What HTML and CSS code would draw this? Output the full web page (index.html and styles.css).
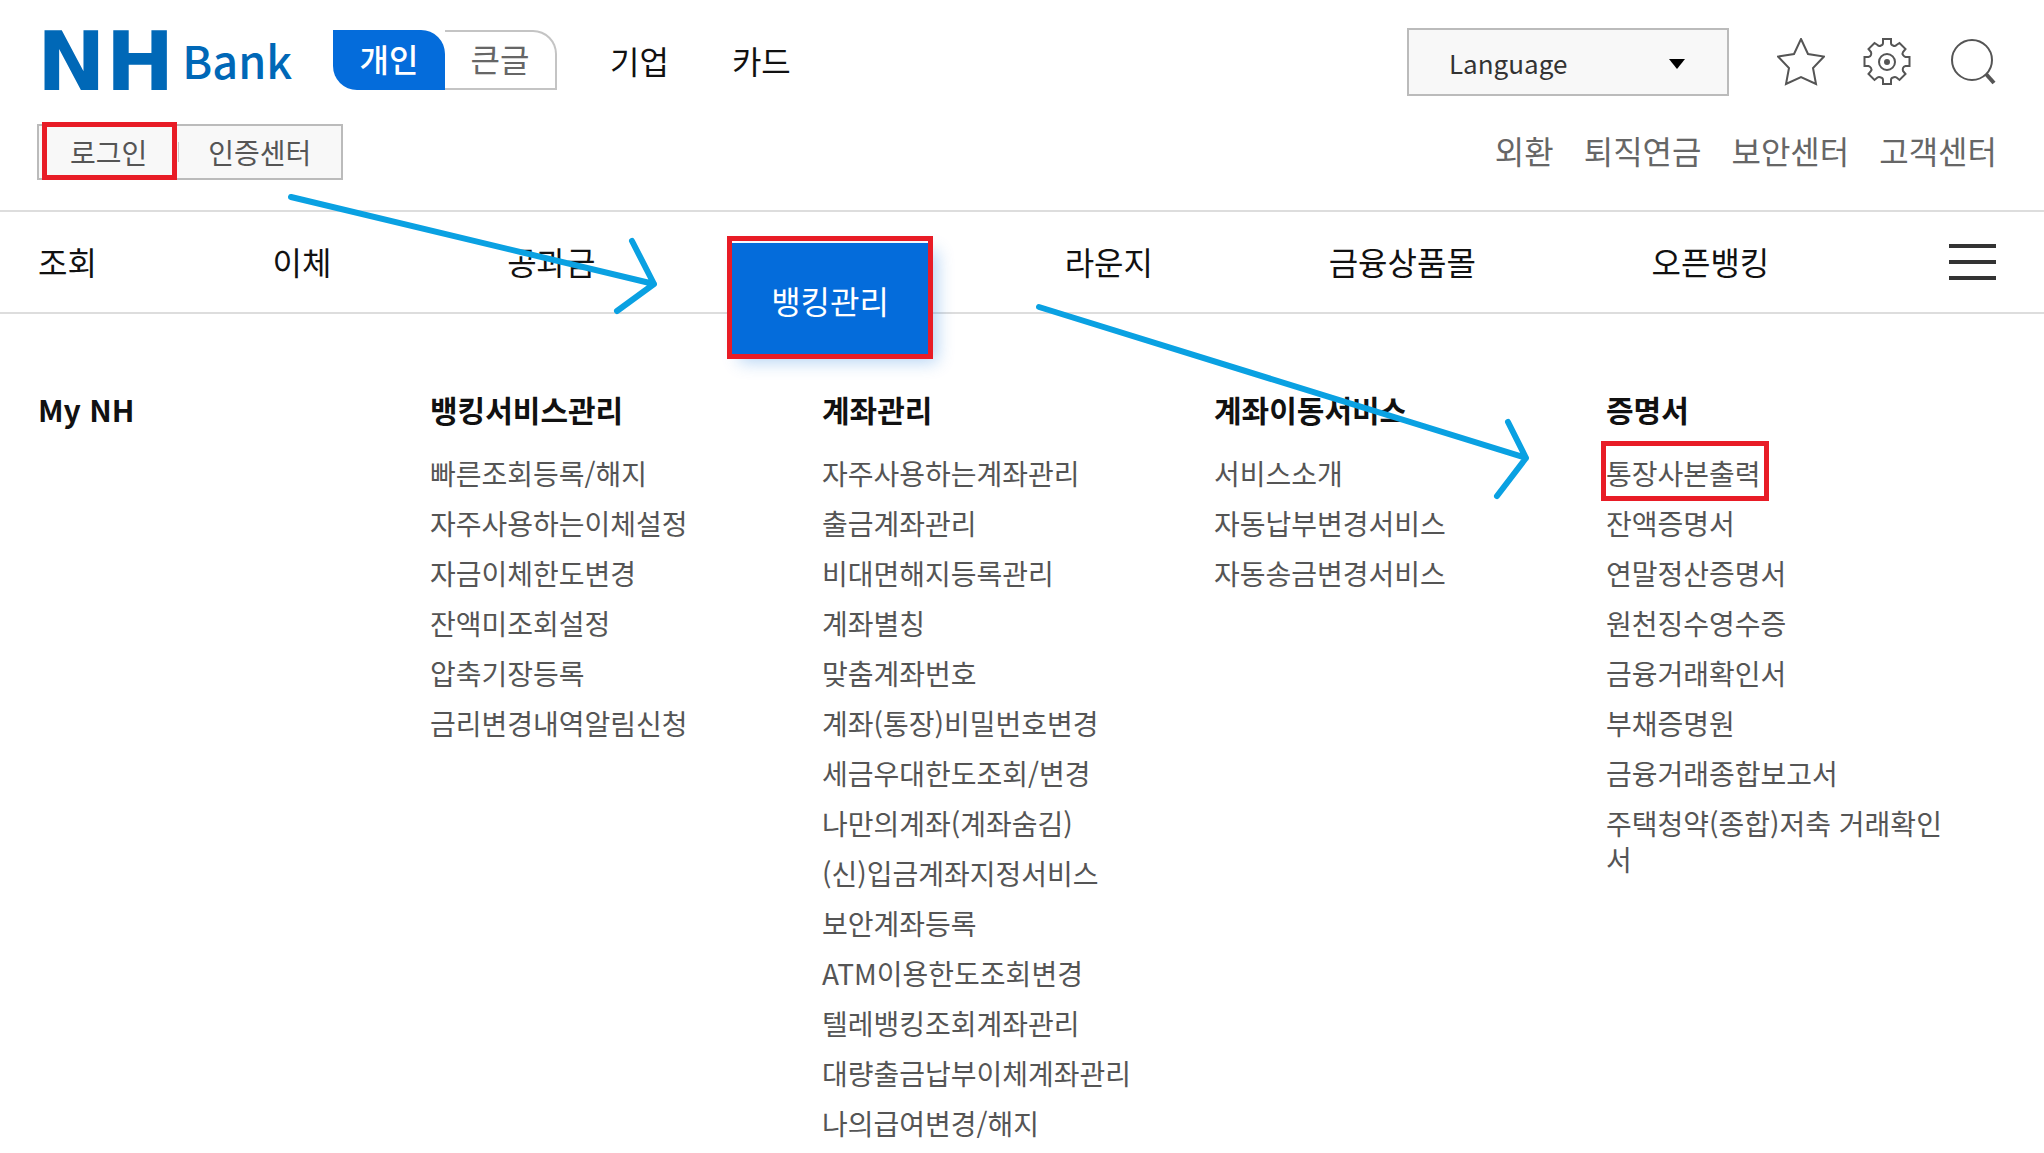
FILE: index.html
```html
<!DOCTYPE html>
<html lang="ko">
<head>
  <meta charset="UTF-8" />
  <meta name="viewport" content="width=device-width, initial-scale=1" />
  <title>NH Bank</title>
  <link rel="stylesheet" href="styles.css">
</head>
<body>

<header class="header">
  <div class="header-row">
    <a href="#" class="logo"><span class="logo-nh">NH</span><span class="logo-bank">Bank</span></a>

    <div class="view-toggle">
      <button type="button" class="toggle-btn on">개인</button>
      <button type="button" class="toggle-btn">큰글</button>
    </div>

    <div class="site-links">
      <a href="#">기업</a>
      <a href="#">카드</a>
    </div>

    <div class="tools">
      <div class="language">
        <select class="language-select" aria-label="Language">
          <option>Language</option>
        </select>
        <svg class="language-arrow" width="18" height="10" viewBox="0 0 18 10"><path d="M1 0h16L9 10z" /></svg>
      </div>
      <button type="button" class="icon-btn" aria-label="즐겨찾기">
        <svg width="48" height="48" viewBox="0 0 48 48">
          <path d="M24 1L31 16L47 18.500L36 30L39 46L24 39L9 46L12 30L1 18.500L17 16Z" />
        </svg>
      </button>
      <button type="button" class="icon-btn" aria-label="설정">
        <svg width="48" height="48" viewBox="0 0 48 48">
          <path d="M20 1h8v4q0 2 2 2.500q2 1 3.500 -.5l3-2l6 6l-2.500 3q-1 1.500 0 3t2.500 2h4v9h-4q-2 .5-2.500 2t0 3l2.500 3l-6 6l-3-2.500q-1.500-1-3.500 0q-2 .5-2 2.500v4h-8v-4q0-2-2-2.500q-2-1-3.500 0l-3 2.500l-6-6l2.500-3q1-1.500 0-3t-2.500-2h-4v-9h4q2-.5 2.500-2t0-3l-2.500-3l6-6l3 2q1.500 1.500 3.500 .5q2-.5 2-2.500z" />
          <circle cx="24" cy="24" r="8" />
          <circle class="solid" cx="24" cy="24" r="2" />
        </svg>
      </button>
      <button type="button" class="icon-btn" aria-label="검색">
        <svg width="48" height="48" viewBox="0 0 48 48">
          <circle cx="23" cy="22" r="20" />
          <path class="handle" d="M37 36L45 45" />
        </svg>
      </button>
    </div>
  </div>

  <div class="header-row sub">
    <div class="login-box">
      <a href="#" class="login marked">로그인</a>
      <a href="#" class="cert">인증센터</a>
    </div>
    <div class="util-links">
      <a href="#">외환</a>
      <a href="#">퇴직연금</a>
      <a href="#">보안센터</a>
      <a href="#">고객센터</a>
    </div>
  </div>
</header>

<!-- Main menu -->
<nav class="gnb">
  <a href="#">조회</a>
  <a href="#">이체</a>
  <a href="#">공과금</a>
  <a href="#" class="active marked">뱅킹관리</a>
  <a href="#">라운지</a>
  <a href="#">금융상품몰</a>
  <a href="#">오픈뱅킹</a>
  <button type="button" class="menu-btn" aria-label="전체메뉴"><i></i><i></i><i></i></button>
</nav>

<!-- Sub menu -->
<main class="submenu">
  <section class="menu-col">
    <h2>My NH</h2>
  </section>

  <section class="menu-col">
    <h2>뱅킹서비스관리</h2>
    <ul>
      <li><a href="#">빠른조회등록/해지</a></li>
      <li><a href="#">자주사용하는이체설정</a></li>
      <li><a href="#">자금이체한도변경</a></li>
      <li><a href="#">잔액미조회설정</a></li>
      <li><a href="#">압축기장등록</a></li>
      <li><a href="#">금리변경내역알림신청</a></li>
    </ul>
  </section>

  <section class="menu-col">
    <h2>계좌관리</h2>
    <ul>
      <li><a href="#">자주사용하는계좌관리</a></li>
      <li><a href="#">출금계좌관리</a></li>
      <li><a href="#">비대면해지등록관리</a></li>
      <li><a href="#">계좌별칭</a></li>
      <li><a href="#">맞춤계좌번호</a></li>
      <li><a href="#">계좌(통장)비밀번호변경</a></li>
      <li><a href="#">세금우대한도조회/변경</a></li>
      <li><a href="#">나만의계좌(계좌숨김)</a></li>
      <li><a href="#">(신)입금계좌지정서비스</a></li>
      <li><a href="#">보안계좌등록</a></li>
      <li><a href="#">ATM이용한도조회변경</a></li>
      <li><a href="#">텔레뱅킹조회계좌관리</a></li>
      <li><a href="#">대량출금납부이체계좌관리</a></li>
      <li><a href="#">나의급여변경/해지</a></li>
    </ul>
  </section>

  <section class="menu-col">
    <h2>계좌이동서비스</h2>
    <ul>
      <li><a href="#">서비스소개</a></li>
      <li><a href="#">자동납부변경서비스</a></li>
      <li><a href="#">자동송금변경서비스</a></li>
    </ul>
  </section>

  <section class="menu-col">
    <h2>증명서</h2>
    <ul>
      <li><a href="#" class="copy-print marked">통장사본출력</a></li>
      <li><a href="#">잔액증명서</a></li>
      <li><a href="#">연말정산증명서</a></li>
      <li><a href="#">원천징수영수증</a></li>
      <li><a href="#">금융거래확인서</a></li>
      <li><a href="#">부채증명원</a></li>
      <li><a href="#">금융거래종합보고서</a></li>
      <li><a href="#">주택청약(종합)저축 거래확인서</a></li>
    </ul>
  </section>
</main>

<!-- Guide arrows: login > banking management > passbook copy -->
<svg class="guide" viewBox="0 0 2044 520" aria-hidden="true">
  <path d="M291 197L654 284M632 241L654 284L617 311" />
  <path d="M1039 307L1526 458M1508 422L1526 458L1497 496" />
</svg>

</body>
</html>
```

FILE: styles.css
```css
* { box-sizing: border-box; }
body {
  position: relative;
  margin: 0;
  background: #fff;
  color: #111;
  font-family: "Noto Sans CJK KR", "Noto Sans", sans-serif;
  font-size: 32px;
}
a {
  color: inherit;
  text-decoration: none;
}
button {
  padding: 0;
  border: none;
  background: none;
  font: inherit;
  cursor: pointer;
}

/* Header */
.header {
  padding: 28px 47px 30px 37px;
  border-bottom: 2px solid #ddd;
}
.header-row {
  display: flex;
  align-items: center;
  height: 68px;
}
.header-row.sub {
  justify-content: space-between;
  height: 56px;
  margin-top: 28px;
}
.logo {
  display: flex;
  align-items: center;
  gap: 8px;
  width: 296px;
  color: #0068b7;
  line-height: 56px;
}
.logo-nh {
  font-family: "DejaVu Sans", sans-serif;
  font-size: 82px;
  font-weight: bold;
}
.logo-bank {
  padding-bottom: 4px;
  font-size: 45px;
  font-weight: 500;
}
.view-toggle {
  display: flex;
  height: 60px;
  margin-bottom: 4px;
}
.toggle-btn {
  width: 112px;
  padding-bottom: 4px;
  border: 2px solid #c4c4c4;
  border-left: none;
  border-radius: 0 24px 0 0;
  color: #666;
  line-height: 52px;
}
.toggle-btn.on {
  border: none;
  border-radius: 0 24px 0 24px;
  background: #046cdb;
  color: #fff;
  font-weight: 500;
}
.site-links {
  display: flex;
  gap: 63px;
  margin-left: 53px;
  padding-bottom: 4px;
}
.tools {
  display: flex;
  align-items: center;
  gap: 38px;
  margin-left: auto;
}
.language {
  position: relative;
  width: 322px;
  margin-right: 10px;
}
.language-select {
  display: block;
  width: 100%;
  height: 68px;
  padding: 0 40px;
  border: 2px solid #bbb;
  border-radius: 0;
  background: #f8f8f8;
  color: #333;
  font-family: inherit;
  font-size: 26px;
  appearance: none;
}
.language-arrow {
  position: absolute;
  top: 31px;
  right: 43px;
  pointer-events: none;
}
.icon-btn {
  width: 48px;
  height: 48px;
}
.icon-btn svg {
  display: block;
  fill: none;
  stroke: #555;
  stroke-width: 2;
}
.icon-btn .solid { fill: #555; }
.icon-btn .handle { stroke-width: 4; }
.login-box {
  display: flex;
  align-items: center;
  height: 56px;
  border: 2px solid #bbb;
  background: #f8f8f8;
  color: #555;
  font-size: 28px;
  line-height: 50px;
}
.login { padding: 0 31px; }
.cert {
  padding: 0 30px 0 29px;
  border-left: 1px solid #ccc;
  line-height: 20px;
}
.util-links {
  display: flex;
  gap: 30px;
  padding-bottom: 4px;
  color: #666;
}

/* Red frame round the steps of the guide */
.marked { position: relative; }
.marked::after {
  content: "";
  position: absolute;
  inset: -7px -4px -5px;
  border: 5px solid #e81c26;
}
.login.marked::after { inset: -5px 1px -3px 3px; }
.copy-print.marked::after { inset: -12px -8px -8px -5px; }

/* Main menu */
.gnb {
  display: flex;
  justify-content: space-between;
  height: 102px;
  padding: 0 48px 0 38px;
  border-bottom: 2px solid #ddd;
  line-height: 98px;
}
.gnb .active {
  height: 111px;
  margin: 31px -40px 0;
  padding: 8px 40px 0;
  background: #046cdb;
  box-shadow: 8px 8px 16px rgba(4, 108, 219, 0.3);
  color: #fff;
}
.menu-btn {
  display: flex;
  flex-direction: column;
  justify-content: space-between;
  align-self: center;
  width: 51px;
  height: 36px;
  padding-left: 4px;
}
.menu-btn i {
  width: 100%;
  height: 4px;
  background: #333;
}

/* Sub menu */
.submenu {
  display: grid;
  grid-template-columns: repeat(5, 1fr);
  padding: 71px 46px 10px 38px;
}
.menu-col { padding-right: 40px; }
.menu-col h2 {
  margin: 0 0 22px;
  font-size: 30px;
  line-height: 48px;
}
.menu-col ul {
  margin: 0;
  padding: 0;
  list-style: none;
}
.menu-col li {
  color: #555;
  font-size: 28px;
  line-height: 36px;
  word-break: break-all;
}
.menu-col li + li { margin-top: 14px; }

.guide {
  position: absolute;
  top: 0;
  left: 0;
  width: 100%;
  fill: none;
  stroke: #0aa1e2;
  stroke-width: 6;
  stroke-linecap: round;
  stroke-linejoin: round;
  pointer-events: none;
}
```
